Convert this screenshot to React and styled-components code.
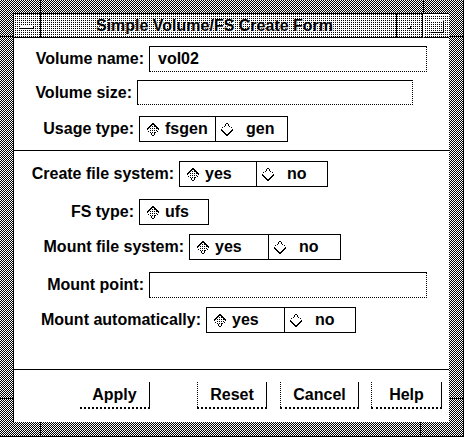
import React from "react";
import styled, { createGlobalStyle } from "styled-components";

const GlobalStyle = createGlobalStyle`
  html, body { margin: 0; padding: 0; background: #fff; }
  body { font-family: "Liberation Sans", Arial, sans-serif; color: #000; }
  * { box-sizing: border-box; }
`;

// checker dither, like the old mono X display
const dither = `
  background-color: #fff;
  background-image: repeating-conic-gradient(#000 0 25%, #fff 0 50%);
  background-size: 2px 2px;
`;

const lightDither = `
  background-color: #fff;
  background-image: repeating-conic-gradient(#000 0 25%, #fff 0 100%);
  background-size: 2px 2px;
`;

const Window = styled.div`
  position: relative;
  width: 464px;
  height: 437px;
  padding: 13px 14px 14px 13px;
  border-right: 1px solid #000;
  border-bottom: 1px solid #000;
  ${dither}
`;

const Tick = styled.span`
  position: absolute;
  left: ${(p) => p.$x}px;
  top: ${(p) => p.$y}px;
  width: ${(p) => p.$w}px;
  height: ${(p) => p.$h}px;
  background: #000;
`;

const Inner = styled.div`
  display: flex;
  flex-direction: column;
  height: 100%;
  border-left: 1px solid #000;
  border-top: 1px solid #000;
`;

const TitleBar = styled.div`
  display: flex;
  height: 24px;
  ${lightDither}
`;

const MenuButton = styled.div`
  width: 27px;
  display: flex;
  align-items: center;
  justify-content: center;
  border-right: 1px solid #000;
  border-bottom: 1px solid #000;
`;

const MenuBar = styled.span`
  width: 14px;
  height: 3px;
  margin-top: 3px;
  background: #fff;
  border-bottom: 1px solid #000;
  border-right: 1px solid #000;
`;

const Title = styled.div`
  width: 356px;
  display: flex;
  align-items: center;
  justify-content: center;
  padding-right: 8px;
  font-size: 16px;
  font-weight: bold;
  border-right: 1px solid #000;
  border-bottom: 1px solid #000;
  text-shadow: 1px 1px 0 #fff;
`;

const MinButton = styled.div`
  width: 26px;
  display: flex;
  align-items: center;
  justify-content: center;
  border-right: 1px solid #000;
  border-bottom: 1px solid #000;
`;

const MinGlyph = styled.span`
  width: 3px;
  height: 3px;
  margin-top: 3px;
  background: #fff;
  border-right: 1px solid #000;
  border-bottom: 1px solid #000;
`;

const MaxButton = styled.div`
  width: 26px;
  display: flex;
  align-items: center;
  justify-content: center;
  border-top: 1px solid #fff;
  border-left: 1px solid #fff;
  border-bottom: 1px solid #000;
`;

const MaxGlyph = styled.span`
  width: 14px;
  height: 13px;
  border-top: 1px solid #fff;
  border-left: 1px solid #fff;
  border-right: 1px solid #000;
  border-bottom: 1px solid #000;
`;

const Client = styled.div`
  flex: 1;
  display: flex;
  flex-direction: column;
  background: #fff;
`;

const Row = styled.div`
  display: flex;
  align-items: center;
  height: ${(p) => p.$h || 26}px;
  margin-top: ${(p) => p.$mt}px;
`;

const Label = styled.div`
  width: ${(p) => p.$fieldX - 14}px;
  padding-right: 5px;
  text-align: right;
  font-size: 16px;
  font-weight: bold;
  white-space: nowrap;
`;

const TextField = styled.div`
  width: ${(p) => p.$w}px;
  height: 100%;
  display: flex;
  align-items: center;
  padding-left: 8px;
  font-size: 16px;
  font-weight: bold;
  border-top: 1px solid #000;
  border-left: 1px solid #000;
  border-right: 1px dotted #000;
  border-bottom: 1px dotted #000;
`;

const Options = styled.div`
  display: flex;
  height: 100%;
  border: 1px solid #000;
`;

const Segment = styled.div`
  width: ${(p) => p.$w}px;
  display: flex;
  align-items: center;
  padding-left: ${(p) => (p.$on ? 6 : 4)}px;
  gap: ${(p) => (p.$on ? 5 : 12)}px;
  font-size: 16px;
  font-weight: bold;
  & + & {
    border-left: 1px solid #000;
  }
`;

const Separator = styled.div`
  height: 1px;
  background: #000;
  margin-top: ${(p) => p.$mt}px;
`;

const ButtonBar = styled.div`
  display: flex;
  height: 27px;
  margin-top: 12px;
  padding-left: 66px;
`;

const Button = styled.div`
  width: ${(p) => p.$w}px;
  margin-left: ${(p) => p.$ml || 0}px;
  display: flex;
  align-items: center;
  justify-content: center;
  font-size: 16px;
  font-weight: bold;
  border-right: 1px solid #000;
  border-bottom: 2px dotted #000;
  border-left: ${(p) => (p.$plain ? "none" : "1px dotted #000")};
`;

const Diamond = ({ on }) => (
  <svg width="14" height="14" viewBox="0 0 14 14" shapeRendering="crispEdges">
    <defs>
      <pattern id="dia-dots" width="2" height="2" patternUnits="userSpaceOnUse">
        <rect width="1" height="1" fill="#000" />
      </pattern>
    </defs>
    {on && <path d="M7 2 L12 7 L7 12 L2 7 Z" fill="url(#dia-dots)" />}
    <path
      d="M1 7.5 L7 1.5 L13 7.5"
      fill="none"
      stroke="#000"
      strokeDasharray={on ? undefined : "1 1"}
    />
    <path
      d="M1 7.5 L7 13.5 L13 7.5"
      fill="none"
      stroke="#000"
      strokeDasharray={on ? "1 1" : undefined}
    />
  </svg>
);

const Choice = ({ items }) => (
  <Options>
    {items.map((it) => (
      <Segment key={it.label} $w={it.w} $on={it.on}>
        <Diamond on={it.on} />
        {it.label}
      </Segment>
    ))}
  </Options>
);

const App = () => (
  <>
    <GlobalStyle />
    <Window>
      <Tick $x={40} $y={0} $w={1} $h={13} />
      <Tick $x={0} $y={36} $w={13} $h={1} />
      <Tick $x={423} $y={0} $w={1} $h={13} />
      <Tick $x={450} $y={36} $w={13} $h={1} />
      <Tick $x={0} $y={398} $w={13} $h={1} />
      <Tick $x={40} $y={422} $w={1} $h={14} />
      <Tick $x={450} $y={398} $w={13} $h={1} />
      <Tick $x={420} $y={422} $w={1} $h={14} />
      <Inner>
        <TitleBar>
          <MenuButton>
            <MenuBar />
          </MenuButton>
          <Title>Simple Volume/FS Create Form</Title>
          <MinButton>
            <MinGlyph />
          </MinButton>
          <MaxButton>
            <MaxGlyph />
          </MaxButton>
        </TitleBar>
        <Client>
          <Row $mt={8}>
            <Label $fieldX={149}>Volume name:</Label>
            <TextField $w={278}>vol02</TextField>
          </Row>
          <Row $mt={8} $h={25}>
            <Label $fieldX={137}>Volume size:</Label>
            <TextField $w={276} />
          </Row>
          <Row $mt={11}>
            <Label $fieldX={139}>Usage type:</Label>
            <Choice
              items={[
                { label: "fsgen", w: 75, on: true },
                { label: "gen", w: 72 },
              ]}
            />
          </Row>
          <Separator $mt={8} />
          <Row $mt={10}>
            <Label $fieldX={179}>Create file system:</Label>
            <Choice
              items={[
                { label: "yes", w: 76, on: true },
                { label: "no", w: 71 },
              ]}
            />
          </Row>
          <Row $mt={12}>
            <Label $fieldX={139}>FS type:</Label>
            <Choice items={[{ label: "ufs", w: 68, on: true }]} />
          </Row>
          <Row $mt={9}>
            <Label $fieldX={189}>Mount file system:</Label>
            <Choice
              items={[
                { label: "yes", w: 78, on: true },
                { label: "no", w: 72 },
              ]}
            />
          </Row>
          <Row $mt={12}>
            <Label $fieldX={149}>Mount point:</Label>
            <TextField $w={278} />
          </Row>
          <Row $mt={9}>
            <Label $fieldX={206}>Mount automatically:</Label>
            <Choice
              items={[
                { label: "yes", w: 77, on: true },
                { label: "no", w: 71 },
              ]}
            />
          </Row>
          <Separator $mt={36} />
          <ButtonBar>
            <Button $w={70} $plain>Apply</Button>
            <Button $w={70} $ml={47}>Reset</Button>
            <Button $w={79} $ml={13}>Cancel</Button>
            <Button $w={71} $ml={12}>Help</Button>
          </ButtonBar>
        </Client>
      </Inner>
    </Window>
  </>
);

export default App;
